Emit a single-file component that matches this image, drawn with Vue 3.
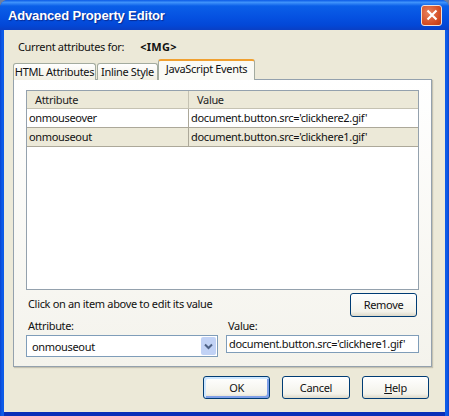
<script setup>
const rows = [
  { name: "onmouseover", value: "document.button.src='clickhere2.gif'", selected: false },
  { name: "onmouseout", value: "document.button.src='clickhere1.gif'", selected: true },
];
</script>
<template>
  <div class="window">
    <div class="titlebar">
      <span class="title">Advanced Property Editor</span>
      <button class="close">
        <svg width="12" height="12" viewBox="0 0 12 12">
          <path d="M1.5 1.5 L10.5 10.5 M10.5 1.5 L1.5 10.5" stroke="#fff" stroke-width="2.2" fill="none" />
        </svg>
      </button>
    </div>
    <div class="content">
      <div class="current">
        <span>Current attributes for:</span>
        <span class="tag">&lt;IMG&gt;</span>
      </div>
      <div class="tabs">
        <div class="tab tab1">HTML Attributes</div>
        <div class="tab tab2">Inline Style</div>
        <div class="tab active">JavaScript Events</div>
      </div>
      <div class="panel">
        <div class="table">
          <div class="thead">
            <div class="th col1">Attribute</div>
            <div class="th col2">Value</div>
          </div>
          <div v-for="row in rows" :key="row.name" class="row" :class="{ selected: row.selected }">
            <div class="cell col1">{{ row.name }}</div>
            <div class="cell col2">{{ row.value }}</div>
          </div>
        </div>
        <div class="hint-row">
          <span class="hint">Click on an item above to edit its value</span>
          <button class="btn remove">Remove</button>
        </div>
        <div class="fields">
          <div class="field attr">
            <label>Attribute:</label>
            <div class="select">
              <span>onmouseout</span>
              <span class="arrow">
                <svg width="9" height="7" viewBox="0 0 9 7">
                  <path d="M1 1.5 L4.5 5 L8 1.5" stroke="#4d6185" stroke-width="2" fill="none" />
                </svg>
              </span>
            </div>
          </div>
          <div class="field val">
            <label>Value:</label>
            <div class="input">document.button.src='clickhere1.gif'</div>
          </div>
        </div>
      </div>
      <div class="footer">
        <button class="btn default">OK</button>
        <button class="btn cancel">Cancel</button>
        <button class="btn"><u>H</u>elp</button>
      </div>
    </div>
  </div>
</template>
<style>
html,
body {
  margin: 0;
  background: #6f7f9f;
}
</style>
<style scoped>
.window {
  width: 449px;
  height: 416px;
  display: flex;
  flex-direction: column;
  font-family: "Noto Sans", sans-serif;
  font-size: 11px;
  letter-spacing: -0.33px;
  color: #111;
  background: linear-gradient(90deg, #0a44d0 0, #0d5be8 2px, #0d5be8 447px, #0a44d0 100%);
  overflow: hidden;
  border-radius: 8px 8px 0 0;
}
.titlebar {
  height: 30px;
  flex: none;
  display: flex;
  align-items: center;
  justify-content: space-between;
  padding: 0 7px 0 8px;
  background: linear-gradient(180deg, #0a5ae6 0%, #3f93fb 8%, #0a5fe8 20%, #0550e0 60%, #0347d6 85%, #0a3fc4 100%);
}
.title {
  color: #fff;
  font-family: "Liberation Sans", sans-serif;
  font-weight: 700;
  font-size: 13px;
  letter-spacing: -0.15px;
  text-shadow: 1px 1px 1px #0a2a90;
}
.close {
  width: 21px;
  height: 21px;
  padding: 0;
  display: flex;
  align-items: center;
  justify-content: center;
  border: 1px solid #f0e0d8;
  border-radius: 3px;
  background: radial-gradient(circle at 35% 35%, #e8825f, #d2491f 70%, #b53a15);
}
.content {
  flex: 1;
  margin: 0 4px;
  padding: 0 13px 13px 9px;
  background: #ece9d8;
  display: flex;
  flex-direction: column;
  border-bottom: 4px solid #0a2fb8;
}
.current {
  height: 30px;
  padding: 2px 0 0 5px;
  box-sizing: border-box;
  display: flex;
  align-items: center;
  gap: 16px;
  flex: none;
}
.tag {
  font-weight: 700;
  letter-spacing: 0.3px;
}
.tabs {
  display: flex;
  align-items: flex-end;
  height: 20px;
  flex: none;
  position: relative;
  z-index: 1;
  margin-bottom: -1px;
}
.tab {
  height: 17px;
  box-sizing: border-box;
  border: 1px solid #a3ab9f;
  border-bottom: none;
  border-radius: 3px 3px 0 0;
  background: linear-gradient(180deg, #ffffff, #f0eee2);
  display: flex;
  align-items: center;
  justify-content: center;
  white-space: nowrap;
  padding-bottom: 1px;
}
.tab1 {
  width: 83px;
}
.tab2 {
  width: 61px;
  margin-left: 1px;
}
.active {
  width: 97px;
  height: 21px;
  background: #fafaf5;
  border-top: 2px solid #f0a030;
  padding-bottom: 4px;
}
.panel {
  flex: 1;
  box-sizing: border-box;
  border: 1px solid #94a1ad;
  background: linear-gradient(180deg, #fff, #f4f3ec);
  padding: 10px 12px 0 12px;
  display: flex;
  flex-direction: column;
  box-shadow: 1px 1px 1px #c5c2b2;
}
.table {
  height: 200px;
  flex: none;
  box-sizing: border-box;
  border: 1px solid #94a1ad;
  background: #fff;
}
.thead {
  display: flex;
  height: 17px;
  background: #ece9d8;
  border-bottom: 1px solid #c5c2b2;
}
.th {
  padding-left: 8px;
  line-height: 17px;
  box-sizing: border-box;
  color: #222;
}
.row {
  display: flex;
  height: 18px;
  border-bottom: 1px solid #aca899;
}
.selected {
  background: #ece9d8;
}
.col1 {
  width: 161px;
  flex: none;
}
.col2 {
  flex: 1;
  border-left: 1px solid #aca899;
}
.thead .col2 {
  border-left: 1px solid #c5c2b2;
}
.cell {
  padding-left: 2px;
  line-height: 18px;
  box-sizing: border-box;
  white-space: nowrap;
}
.hint-row {
  height: 26px;
  flex: none;
  display: flex;
  align-items: center;
  justify-content: space-between;
  padding: 3px 2px 0 2px;
  box-sizing: border-box;
}
.hint {
  margin-bottom: 2px;
}
.btn {
  width: 67px;
  height: 23px;
  padding: 0;
  box-sizing: border-box;
  font: inherit;
  letter-spacing: inherit;
  color: #111;
  border: 1px solid #003c74;
  border-radius: 3px;
  background: linear-gradient(180deg, #ffffff, #f3f2ea 80%, #dcd8c8);
}
.cancel {
  width: 68px;
}
.remove {
  height: 24px;
}
.fields {
  display: flex;
  gap: 8px;
  margin-top: 3px;
}
.field {
  display: flex;
  flex-direction: column;
}
.field label {
  padding-left: 2px;
  height: 16px;
  line-height: 14px;
}
.attr {
  width: 192px;
  flex: none;
}
.val {
  flex: 1;
  min-width: 0;
}
.select {
  height: 22px;
  box-sizing: border-box;
  border: 1px solid #7f9db9;
  background: #fff;
  display: flex;
  align-items: center;
  justify-content: space-between;
  padding: 1px 1px 1px 5px;
}
.arrow {
  width: 15px;
  height: 18px;
  display: flex;
  align-items: center;
  justify-content: center;
  background: #c1d2f5;
  border-radius: 2px;
}
.input {
  height: 18px;
  line-height: 16px;
  box-sizing: border-box;
  border: 1px solid #7f9db9;
  background: #fff;
  padding-left: 2px;
  white-space: nowrap;
}
.footer {
  display: flex;
  justify-content: flex-end;
  gap: 12px;
  padding: 9px 3px 0 0;
  flex: none;
}
.default {
  border: 1px solid #003c74;
  box-shadow: inset 2px 2px 0 #cee7ff, inset -2px -2px 0 #7fa0e8;
}
</style>
